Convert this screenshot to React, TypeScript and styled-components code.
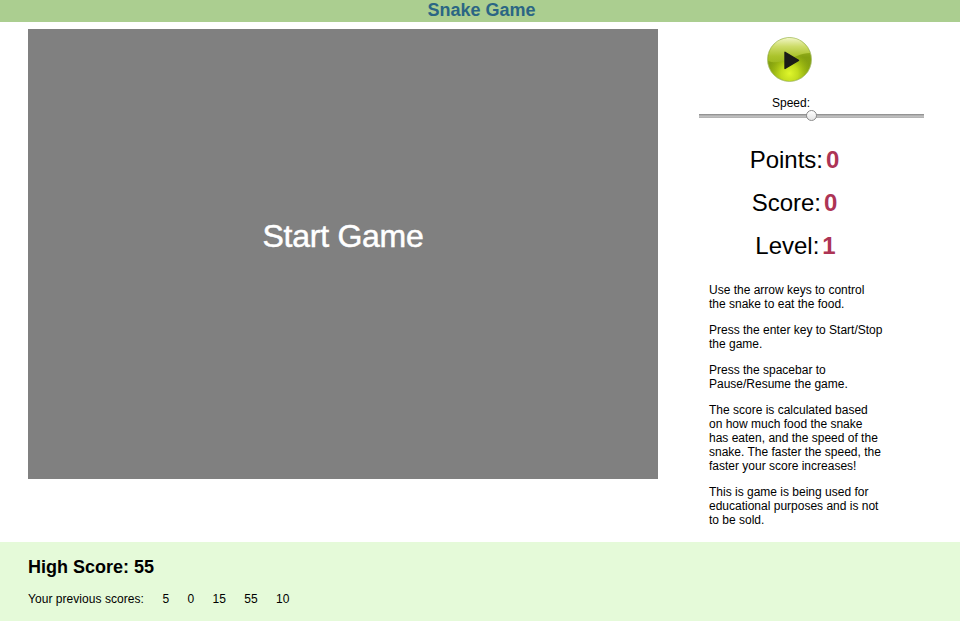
import React from "react";
import styled, { createGlobalStyle } from "styled-components";

const GlobalStyle = createGlobalStyle`
  * { box-sizing: border-box; }
  body {
    margin: 0;
    background: #fff;
    color: #000;
    font: 12px/14px "Liberation Sans", Arial, Helvetica, sans-serif;
  }
  p, h1, h2 { margin: 0; }
`;

const Page = styled.div`
  width: 960px;
  height: 631px;
  display: flex;
  flex-direction: column;
`;

const Header = styled.header`
  height: 22px;
  background: #abce90;
  text-align: center;
  padding-left: 3px;
`;

const Title = styled.h1`
  font-size: 18px;
  line-height: 20px;
  color: #2b6684;
`;

const Main = styled.main`
  height: 520px;
  display: flex;
  align-items: flex-start;
  padding: 7px 0 0 28px;
`;

const Board = styled.section`
  width: 630px;
  height: 450px;
  background: #808080;
  display: flex;
  justify-content: center;
  padding-top: 188px;
`;

const StartLabel = styled.span`
  font-size: 32px;
  line-height: 38px;
  letter-spacing: -0.25px;
  color: #fff;
  -webkit-text-stroke: 0.5px #fff;
  height: 38px;
`;

const Sidebar = styled.aside`
  width: 225px;
  margin-left: 41px;
  display: flex;
  flex-direction: column;
`;

const PlayButton = styled.button`
  width: 46px;
  height: 46px;
  margin: 8px 0 0 68px;
  padding: 0;
  border: 0;
  background: none;
  svg { display: block; }
`;

const SpeedLabel = styled.label`
  margin: 13px 0 0 73px;
`;

const Track = styled.div`
  height: 11px;
  display: flex;
  align-items: center;
  justify-content: center;
  background: linear-gradient(#858585, #b4b4b4 40%, #c6c6c6 75%, #a3a3a3) center / 100% 4px no-repeat;
`;

const Thumb = styled.div`
  width: 11px;
  height: 11px;
  border: 1px solid #8b8b8b;
  border-radius: 50%;
  background: linear-gradient(#fff, #e4e4e4);
`;

const Stats = styled.div`
  width: 191px;
  margin-top: 25px;
  display: flex;
  flex-direction: column;
  gap: 15px;
`;

const Stat = styled.div<{ $indent?: number }>`
  display: flex;
  justify-content: center;
  gap: 3px;
  padding-left: ${(p) => p.$indent ?? 0}px;
  font-size: 24px;
  line-height: 28px;
`;

const StatValue = styled.strong`
  color: #ad3455;
`;

const Instructions = styled.div`
  width: 180px;
  margin: 23px 0 0 10px;
  display: flex;
  flex-direction: column;
  gap: 12px;
`;

const Line = styled.span`
  display: block;
  white-space: nowrap;
`;

const Footer = styled.footer`
  height: 79px;
  background: #e5fad9;
  padding: 15px 28px 0;
`;

const HighScore = styled.h2`
  font-size: 18px;
  line-height: 20px;
`;

const ScoreRow = styled.div`
  display: flex;
  gap: 18.4px;
  margin-top: 15px;
`;

const ScoreLabel = styled.span`
  letter-spacing: 0.05px;
`;

const stats = [
  { label: "Points:", value: 0 },
  { label: "Score:", value: 0 },
  { label: "Level:", value: 1, indent: 2 },
];

const instructions = [
  ["Use the arrow keys to control", "the snake to eat the food."],
  ["Press the enter key to Start/Stop", "the game."],
  ["Press the spacebar to", "Pause/Resume the game."],
  [
    "The score is calculated based",
    "on how much food the snake",
    "has eaten, and the speed of the",
    "snake. The faster the speed, the",
    "faster your score increases!",
  ],
  ["This is game is being used for", "educational purposes and is not", "to be sold."],
];

const previousScores = [5, 0, 15, 55, 10];

function PlayIcon() {
  return (
    <svg width="46" height="46" viewBox="0 0 46 46">
      <defs>
        <linearGradient id="base" x1="0" y1="0" x2="0" y2="1">
          <stop offset="0" stopColor="#b5ce38" />
          <stop offset="0.45" stopColor="#84a010" />
          <stop offset="0.75" stopColor="#87a410" />
          <stop offset="1" stopColor="#9ab62a" />
        </linearGradient>
        <radialGradient id="glow" cx="0.5" cy="0.82" r="0.5">
          <stop offset="0" stopColor="#e0f72c" />
          <stop offset="0.4" stopColor="#cce51f" stopOpacity="0.85" />
          <stop offset="1" stopColor="#a5c20b" stopOpacity="0" />
        </radialGradient>
        <linearGradient id="gloss" x1="0" y1="0" x2="0" y2="1">
          <stop offset="0" stopColor="#f0f5c4" />
          <stop offset="0.35" stopColor="#cddc68" />
          <stop offset="0.75" stopColor="#abc32c" />
          <stop offset="1" stopColor="#9fba20" />
        </linearGradient>
      </defs>
      <circle cx="22.5" cy="22.5" r="22" fill="url(#base)" stroke="#a9bf70" strokeWidth="0.8" />
      <circle cx="22.5" cy="22.5" r="21.5" fill="url(#glow)" />
      <path d="M1.2 24C0.8 10 11 1 22.5 1C32 1 40 7 43 16C34 16 28 20 20 23C13 25.5 6 26 1.2 24Z" fill="url(#gloss)" />
      <path d="M18 15.3L31.5 23.3L18 31.5Z" fill="#1b1c18" stroke="#1b1c18" strokeWidth="1.4" strokeLinejoin="round" />
    </svg>
  );
}

export default function App() {
  return (
    <>
      <GlobalStyle />
      <Page>
        <Header>
          <Title>Snake Game</Title>
        </Header>
        <Main>
          <Board>
            <StartLabel>Start Game</StartLabel>
          </Board>
          <Sidebar>
            <PlayButton aria-label="Play">
              <PlayIcon />
            </PlayButton>
            <SpeedLabel>Speed:</SpeedLabel>
            <Track>
              <Thumb />
            </Track>
            <Stats>
              {stats.map((s) => (
                <Stat key={s.label} $indent={s.indent}>
                  {s.label}
                  <StatValue>{s.value}</StatValue>
                </Stat>
              ))}
            </Stats>
            <Instructions>
              {instructions.map((lines) => (
                <p key={lines[0]}>
                  {lines.map((l) => (
                    <Line key={l}>{l}</Line>
                  ))}
                </p>
              ))}
            </Instructions>
          </Sidebar>
        </Main>
        <Footer>
          <HighScore>High Score: 55</HighScore>
          <ScoreRow>
            <ScoreLabel>Your previous scores:</ScoreLabel>
            {previousScores.map((s) => (
              <span key={s}>{s}</span>
            ))}
          </ScoreRow>
        </Footer>
      </Page>
    </>
  );
}
